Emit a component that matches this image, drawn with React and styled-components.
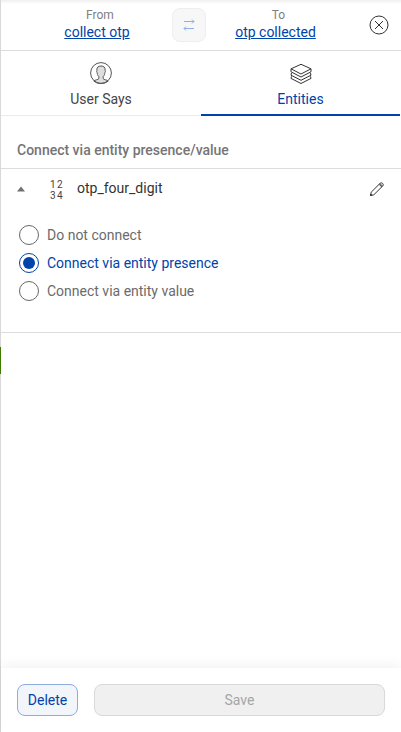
import React, { useState } from "react";
import styled, { createGlobalStyle } from "styled-components";

const GlobalStyle = createGlobalStyle`
  * { box-sizing: border-box; }
  body {
    margin: 0;
    background: #fff;
    font-family: Roboto, "Liberation Sans", sans-serif;
    font-size: 14px;
    color: #333;
    overflow: hidden;
  }
  button { font: inherit; padding: 0; cursor: pointer; }
  svg { display: block; }
`;

const Panel = styled.main`
  position: relative;
  display: flex;
  flex-direction: column;
  width: 401px;
  height: 732px;
  border-left: 1px solid #d9d9d9;
  background: #fff;
`;

const EdgeMarker = styled.span`
  position: absolute;
  left: -1px;
  top: 347px;
  width: 1px;
  height: 27px;
  background: #3c7a00;
`;

const Header = styled.header`
  display: grid;
  grid-template-columns: 155px 34px 171px 40px;
  align-items: center;
  height: 51px;
  border-bottom: 1px solid #dcdcdc;
  background: linear-gradient(#efefef, #fff 4px);
`;

const Endpoint = styled.div`
  display: flex;
  flex-direction: column;
  align-items: center;
  padding-left: ${(p) => p.$indent}px;
  margin-top: -3px;
`;

const EndpointLabel = styled.span`
  padding-left: 6px;
  font-size: 12px;
  line-height: 16px;
  color: #808080;
`;

const EndpointLink = styled.a`
  line-height: 18px;
  color: #0043a9;
  text-decoration: underline;
`;

const SwapButton = styled.button`
  display: grid;
  place-items: center;
  width: 34px;
  height: 34px;
  margin-left: 16px;
  border: 1px solid #eee;
  border-radius: 8px;
  background: #f7f7f7;
`;

const CloseButton = styled.button`
  display: grid;
  place-items: center;
  width: 20px;
  height: 20px;
  margin-left: 8px;
  border: 0;
  background: none;
`;

const Tabs = styled.nav`
  display: grid;
  grid-template-columns: 200px 199px;
  height: 65px;
`;

const Tab = styled.button`
  display: flex;
  flex-direction: column;
  align-items: center;
  height: 65px;
  padding-top: 10px;
  border: 0;
  border-bottom: ${(p) => (p.$active ? "2px solid #0043a9" : "1px solid #ebebeb")};
  background: none;
  color: ${(p) => (p.$active ? "#0043a9" : "#444")};
  line-height: 16px;
`;

const TabIcon = styled.span`
  height: 24px;
  margin-bottom: 6px;
  color: #3c3c3c;
`;

const SectionTitle = styled.h2`
  margin: 0;
  height: 53px;
  padding: 26px 16px 0;
  border-bottom: 1px solid #dcdcdc;
  font-size: 14px;
  line-height: 16px;
  font-weight: 500;
  color: #757575;
`;

const EntityCard = styled.section`
  height: 164px;
  border-bottom: 1px solid #dcdcdc;
`;

const EntityRow = styled.div`
  display: grid;
  grid-template-columns: 33px 27px 1fr 16px;
  align-items: center;
  height: 40px;
  padding: 0 16px;
`;

const DigitIcon = styled.span`
  display: grid;
  grid-template-columns: 7px 7px;
  font-size: 10px;
  line-height: 11px;
  color: #444;
  margin-top: 1px;
`;

const EntityName = styled.span`
  line-height: 16px;
  margin-top: -2px;
  color: #333;
`;

const Options = styled.div`
  display: flex;
  flex-direction: column;
  gap: 8px;
  padding: 16px 18px;
`;

const Option = styled.label`
  display: flex;
  align-items: center;
  gap: 8px;
  height: 20px;
  color: ${(p) => (p.$checked ? "#0043a9" : "#6b6b6b")};
  cursor: pointer;
`;

const Radio = styled.input`
  appearance: none;
  display: grid;
  place-items: center;
  width: 20px;
  height: 20px;
  margin: 0;
  border: 1px solid #666;
  border-radius: 50%;
  &:checked { border-color: #0043a9; }
  &:checked::before {
    content: "";
    width: 12px;
    height: 12px;
    border-radius: 50%;
    background: #0043a9;
  }
`;

const Footer = styled.footer`
  display: flex;
  gap: 16px;
  height: 64px;
  margin-top: auto;
  padding: 16px;
  background: #fff;
  box-shadow: 0 0 14px rgba(0, 0, 0, 0.08);
`;

const DeleteButton = styled.button`
  width: 61px;
  height: 32px;
  border: 1px solid #8cadde;
  border-radius: 8px;
  background: #f2f5fa;
  color: #0043a9;
`;

const SaveButton = styled.button`
  flex: 1;
  height: 32px;
  border: 1px solid #d9d9d9;
  border-radius: 8px;
  background: #f0f0f0;
  color: #a6a6a6;
`;

const SwapIcon = () => (
  <svg width="12" height="14" viewBox="0 0 12 14" fill="none" stroke="#8cb0e3" strokeWidth="1">
    <path d="M1 3.500h10M9 1.500l2 2-2 2M11 10.500H1M3 8.500l-2 2 2 2" />
  </svg>
);

const CloseIcon = () => (
  <svg width="20" height="20" viewBox="0 0 20 20" fill="none" stroke="#333" strokeWidth="1">
    <circle cx="10" cy="10" r="9" />
    <path d="M6 6l8 8M14 6l-8 8" />
  </svg>
);

const UserIcon = () => (
  <svg width="24" height="24" viewBox="0 0 24 24" fill="none" stroke="#555" strokeWidth="1">
    <path
      d="M4.800 20c1.300-1.300 4.300-1.100 5-2.300V15.500c-1.400-1.300-1.500-2.500-1.700-4-.8-.7-.5-1.600-.2-2C7.500 6.400 9.200 5 12 5s4.500 1.400 4.100 4.500c.3.400.6 1.300-.2 2-.2 1.500-.3 2.700-1.700 4v2.200c.7 1.200 3.700 1 5 2.300C17 22 14.500 22.500 12 22.500S7 22 4.800 20z"
      fill="#dedede"
    />
    <circle cx="12" cy="12" r="10.400" />
  </svg>
);

const LayersIcon = () => (
  <svg width="24" height="24" viewBox="0 0 24 24" fill="none" stroke="#333" strokeWidth="1" strokeLinejoin="round">
    <path d="M12 3.300L22 7.800 12 13 2 7.800z" />
    <path d="M2 7.800v3l10 5.200 10-5.200v-3" />
    <path d="M2.500 12L2 14.200l10 5.100 10-5.100-.5-2.200" />
    <path d="M2.500 15.300L2 17.400l10 5.100 10-5.100-.5-2.100" />
  </svg>
);

const CaretIcon = () => (
  <svg width="8" height="6" viewBox="0 0 8 6" fill="#707070">
    <path d="M0 5.500L4 .5l4 5z" />
  </svg>
);

const PencilIcon = () => (
  <svg width="16" height="16" viewBox="0 0 16 16" fill="none" stroke="#333" strokeWidth="1" strokeLinejoin="round">
    <path d="M1.500 14.500l.7-3.300L10.900 2.500c.8-.8 1.900-.9 2.700-.1.900.8.800 1.900 0 2.700L4.800 13.800z" />
    <path d="M10.100 3.300l2.700 2.700M10.900 2.600l2.700 2.600" />
    <path d="M1.500 14.500l.3-1.300 1 1z" fill="#333" />
  </svg>
);

const OPTIONS = ["Do not connect", "Connect via entity presence", "Connect via entity value"];

export default function App() {
  const [selected, setSelected] = useState(OPTIONS[1]);
  const [tab, setTab] = useState("Entities");
  return (
    <>
      <GlobalStyle />
      <Panel>
        <EdgeMarker />
        <Header>
          <Endpoint $indent={37}>
            <EndpointLabel>From</EndpointLabel>
            <EndpointLink>collect otp</EndpointLink>
          </Endpoint>
          <SwapButton aria-label="Swap"><SwapIcon /></SwapButton>
          <Endpoint $indent={0}>
            <EndpointLabel>To</EndpointLabel>
            <EndpointLink>otp collected</EndpointLink>
          </Endpoint>
          <CloseButton aria-label="Close"><CloseIcon /></CloseButton>
        </Header>
        <Tabs>
          <Tab $active={tab === "User Says"} onClick={() => setTab("User Says")}>
            <TabIcon><UserIcon /></TabIcon>
            User Says
          </Tab>
          <Tab $active={tab === "Entities"} onClick={() => setTab("Entities")}>
            <TabIcon><LayersIcon /></TabIcon>
            Entities
          </Tab>
        </Tabs>
        <SectionTitle>Connect via entity presence/value</SectionTitle>
        <EntityCard>
          <EntityRow>
            <CaretIcon />
            <DigitIcon>
              <span>1</span><span>2</span><span>3</span><span>4</span>
            </DigitIcon>
            <EntityName>otp_four_digit</EntityName>
            <PencilIcon />
          </EntityRow>
          <Options>
            {OPTIONS.map((label) => (
              <Option key={label} $checked={selected === label}>
                <Radio type="radio" name="mode" checked={selected === label} onChange={() => setSelected(label)} />
                {label}
              </Option>
            ))}
          </Options>
        </EntityCard>
        <Footer>
          <DeleteButton>Delete</DeleteButton>
          <SaveButton disabled>Save</SaveButton>
        </Footer>
      </Panel>
    </>
  );
}
